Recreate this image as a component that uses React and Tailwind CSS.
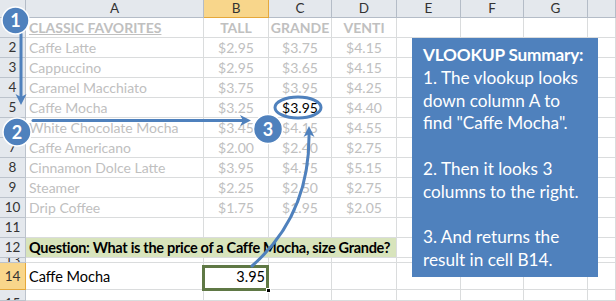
import React from "react";

const FONT = { fontFamily: "Lato, 'Noto Sans', sans-serif" };

const cols = ["A", "B", "C", "D", "E", "F", "G", ""];

const data = [
  ["Caffe Latte", "$2.95", "$3.75", "$4.15"],
  ["Cappuccino", "$2.95", "$3.65", "$4.15"],
  ["Caramel Macchiato", "$3.75", "$3.95", "$4.25"],
  ["Caffe Mocha", "$3.25", "$3.95", "$4.40"],
  ["White Chocolate Mocha", "$3.45", "$4.15", "$4.55"],
  ["Caffe Americano", "$2.00", "$2.40", "$2.75"],
  ["Cinnamon Dolce Latte", "$3.95", "$4.75", "$5.15"],
  ["Steamer", "$2.25", "$2.50", "$2.75"],
  ["Drip Coffee", "$1.75", "$1.95", "$2.05"],
];

function RowHead({ n, hi, cls = "" }) {
  return (
    <div
      className={`flex justify-center overflow-hidden border-r border-b text-[13.5px] text-[#333] ${
        hi ? "bg-[#f8d68b] border-[#e5a83b]" : "bg-[#e4e8ed] border-[#bcc3cc]"
      } ${cls}`}
    >
      {n}
    </div>
  );
}

function Cell({ children, cls = "" }) {
  return (
    <div className={`overflow-visible whitespace-nowrap border-r border-b border-[#dadcdd] ${cls}`}>
      {children}
    </div>
  );
}

function Blanks({ count, cls = "" }) {
  return Array.from({ length: count }).map((_, i) => <Cell key={i} cls={cls} />);
}

export default function App() {
  return (
    <div className="relative w-[616px] h-[301px] overflow-hidden bg-white" style={FONT}>
      <div className="grid grid-cols-[26px_178px_65px_63px_65px_64px_63px_64px_1fr] grid-rows-[18px_repeat(11,20px)_20px_5px_27px_1fr] h-[301px]">
        {/* header row */}
        <div className="bg-[#e4e8ed] border-r border-b border-[#b4bcc7]" />
        {cols.map((c, i) => (
          <div
            key={i}
            className={`flex items-center justify-center border-r border-b text-[13.5px] text-[#333] leading-none ${
              c === "B"
                ? "bg-[#f8d68b] border-[#e5a83b]"
                : "bg-[#e4e8ed] border-[#b4bcc7]"
            }`}
          >
            {c}
          </div>
        ))}

        {/* row 1 */}
        <RowHead n={1} cls="items-center" />
        <Cell cls="pl-[3px] text-[14px] leading-[20px] font-bold text-[#c0c0c0] underline">
          CLASSIC FAVORITES
        </Cell>
        <Cell cls="text-center text-[14px] leading-[20px] font-bold text-[#c0c0c0]">TALL</Cell>
        <Cell cls="text-center text-[14px] leading-[20px] font-bold text-[#c0c0c0]">GRANDE</Cell>
        <Cell cls="text-center text-[14px] leading-[20px] font-bold text-[#c0c0c0]">VENTI</Cell>
        <Blanks count={4} />

        {data.map((r, i) => (
          <React.Fragment key={i}>
            <RowHead n={i + 2} cls="items-center" />
            <Cell cls="pl-[3px] text-[14px] leading-[20px] text-[#c0c0c0]">{r[0]}</Cell>
            <Cell cls="text-center text-[14px] leading-[20px] text-[#c0c0c0]">{r[1]}</Cell>
            <Cell
              cls={`text-center text-[14px] leading-[20px] ${
                i === 3 ? "text-black" : "text-[#c0c0c0]"
              }`}
            >
              {r[2]}
            </Cell>
            <Cell cls="text-center text-[14px] leading-[20px] text-[#c0c0c0]">{r[3]}</Cell>
            <Blanks count={4} />
          </React.Fragment>
        ))}

        {/* row 11 */}
        <RowHead n={11} cls="items-center" />
        <Blanks count={8} />

        {/* row 12 */}
        <RowHead n={12} cls="items-center" />
        <div className="col-span-4 bg-[#d8e4bc] border-r border-b border-[#dadcdd] pl-[3px] text-[14.5px] leading-[20px] font-bold tracking-[-0.3px] text-black whitespace-nowrap">
          Question: What is the price of a Caffe Mocha, size Grande?
        </div>
        <Blanks count={4} />

        {/* row 13 */}
        <RowHead n={13} cls="items-center leading-[20px]" />
        <Blanks count={8} />

        {/* row 14 */}
        <RowHead n={14} hi cls="items-end pb-[3px] leading-[20px]" />
        <Cell cls="flex items-end pb-[2px] pl-[3px] text-[14.5px] leading-[20px] text-black">
          Caffe Mocha
        </Cell>
        <Cell cls="relative flex items-end justify-end pb-[2px] pr-[3px] text-[14.5px] leading-[20px] text-black">
          3.95
          <div className="absolute left-[-2px] top-[2px] right-[-1px] bottom-[-2px] border-[3px] border-[#5f7845]" />
          <div className="absolute right-[-3px] bottom-[-4px] w-[5px] h-[5px] bg-black border border-white" />
        </Cell>
        <Blanks count={6} />

        {/* row 15 */}
        <RowHead n={15} cls="items-start pt-[3px] leading-[20px]" />
        <Blanks count={8} />
      </div>

      {/* summary box */}
      <div className="absolute left-[412px] top-[38px] w-[186px] h-[239px] bg-[#4f81bd] pl-[11px] pt-[6px] text-white text-[17.2px] leading-[22.8px]">
        <div className="font-bold tracking-[-0.2px]">VLOOKUP Summary:</div>
        <div>1. The vlookup looks</div>
        <div>down column A to</div>
        <div>find "Caffe Mocha".</div>
        <div>&nbsp;</div>
        <div>2. Then it looks 3</div>
        <div>columns to the right.</div>
        <div>&nbsp;</div>
        <div>3. And returns the</div>
        <div>result in cell B14.</div>
      </div>

      {/* annotations */}
      <svg className="absolute left-0 top-0" width="616" height="301" viewBox="0 0 616 301">
        <g stroke="#4f81bd" strokeWidth="3" fill="none" strokeLinecap="round">
          <line x1="21" y1="34" x2="21" y2="97" />
          <line x1="33" y1="120.5" x2="243" y2="120.5" />
          <path d="M252 266 Q310 215 309 134" />
          <ellipse cx="298" cy="107.5" rx="23" ry="10.5" />
        </g>
        <g fill="#4f81bd">
          <path d="M21 105 L15.5 94 L21 97 L26.5 94 Z" />
          <path d="M251 120.5 L240 115 L243 120.5 L240 126 Z" />
          <path d="M309 126 L303.5 137 L309 134 L314.5 137 Z" />
        </g>
        <g fill="#4f81bd" stroke="#ffffff" strokeWidth="1.5">
          <circle cx="15.5" cy="20.5" r="13.5" />
          <circle cx="17" cy="132" r="14" />
          <circle cx="268" cy="129" r="14.5" />
        </g>
        <g fill="#ffffff" fontFamily="Lato, 'Noto Sans', sans-serif" fontWeight="700" fontSize="18" textAnchor="middle">
          <text x="15.5" y="27">1</text>
          <text x="17" y="138.5">2</text>
          <text x="268" y="135.5">3</text>
        </g>
      </svg>
    </div>
  );
}
